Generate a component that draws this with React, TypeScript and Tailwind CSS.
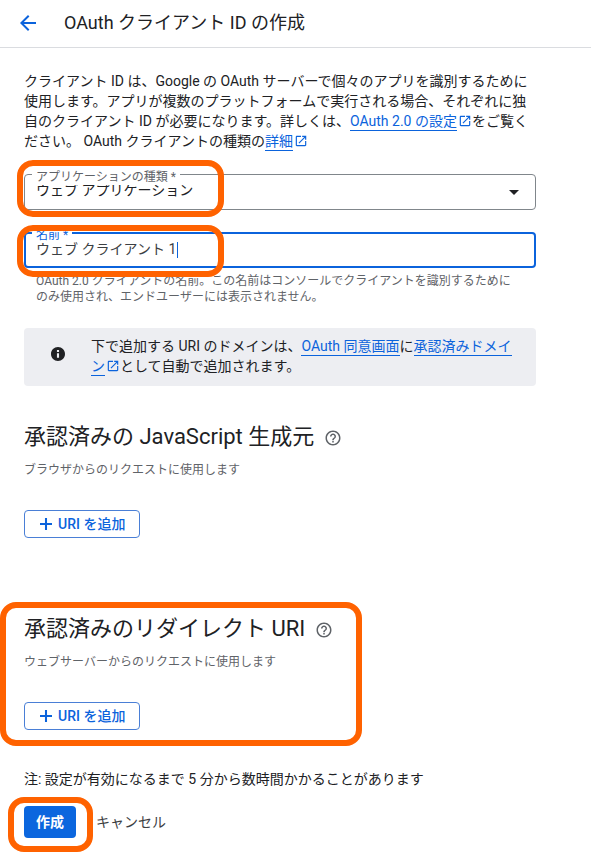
import { useState, type ReactNode } from "react"

const FONT_BODY = "font-[Roboto,'Noto_Sans_CJK_JP',sans-serif]"

const ICONS = {
    back: "M20 11H7.83l5.59-5.59L12 4l-8 8 8 8 1.41-1.41L7.83 13H20v-2z",
    open: "M19 19H5V5h7V3H5c-1.11 0-2 .9-2 2v14c0 1.1.89 2 2 2h14c1.1 0 2-.9 2-2v-7h-2v7zM14 3v2h3.59l-9.83 9.83 1.41 1.41L19 6.41V10h2V3h-7z",
    drop: "M7 10l5 5 5-5z",
    info: "M12 2C6.48 2 2 6.48 2 12s4.48 10 10 10 10-4.48 10-10S17.52 2 12 2zm1.5 15.5h-3v-6.5h3v6.5zm0-8.5h-3V6.2h3V9z",
    help: "M11 18h2v-2h-2v2zm1-16C6.48 2 2 6.48 2 12s4.48 10 10 10 10-4.48 10-10S17.52 2 12 2zm0 18c-4.41 0-8-3.59-8-8s3.59-8 8-8 8 3.59 8 8-3.59 8-8 8zm0-14c-2.21 0-4 1.79-4 4h2c0-1.1.9-2 2-2s2 .9 2 2c0 2-3 1.75-3 5h2c0-2.25 3-2.5 3-5 0-2.21-1.79-4-4-4z",
    plus: "M19 13.2h-5.8v5.8h-2.4v-5.8H5v-2.4h5.8V5h2.4v5.8H19v2.4z",
}

function Icon({ name, className, viewBox = "0 0 24 24" }: { name: keyof typeof ICONS, className: string, viewBox?: string }) {
    return (
        <svg viewBox={viewBox} fill="currentColor" className={className} aria-hidden>
            <path d={ICONS[name]} />
        </svg>
    )
}

function TextLink({ children, external = false }: { children: ReactNode, external?: boolean }) {
    return (
        <>
            <a href="#" className="border-b border-[#0b63dc] pb-px text-[#0b63dc]">{children}</a>
            {external && <Icon name="open" className="ml-px inline size-3.5 align-[-2px] text-[#0b63dc]" />}
        </>
    )
}

// orange marker drawn over the form
function Marker({ className }: { className: string }) {
    return <span className={"pointer-events-none absolute z-20 border-6 border-[#ff6200] " + className} aria-hidden />
}

function UriSection({ title, description }: { title: string, description: string }) {
    return (
        <>
            <div className="flex items-center gap-2.5">
                <h2 className="text-[22px] leading-7 text-[#202124]">{title}</h2>
                <button type="button" aria-label="ヘルプ" className="mt-0.5 text-[#5f6368]">
                    <Icon name="help" className="size-[18px]" />
                </button>
            </div>
            <p className="mt-[11px] text-xs leading-4 text-[#5f6368]">{description}</p>
            <button
                type="button"
                className="mt-8 flex h-7 items-center gap-1.5 rounded-sm border border-[#4a7fd6] pr-3.5 pl-[15px]
                            text-sm font-medium text-[#0b63dc]"
            >
                <Icon name="plus" viewBox="5 5 14 14" className="size-3" />
                URI を追加
            </button>
        </>
    )
}

export default function App() {
    const [kind, setKind] = useState("web")
    const [name, setName] = useState("ウェブ クライアント 1")

    return (
        <div lang="ja" className={"min-h-screen overflow-x-hidden bg-white text-[#202124] " + FONT_BODY}>
            <header className="flex h-12 items-center gap-6 border-b border-[#dadce0] px-4 pb-0.5">
                <a href="#" aria-label="戻る" className="text-[#0b63dc]">
                    <Icon name="back" className="size-6" />
                </a>
                <h1 className="text-lg leading-6">OAuth クライアント ID の作成</h1>
            </header>

            <form className="max-w-[560px] px-6 pt-[23px]" onSubmit={(e) => e.preventDefault()}>
                <p className="text-sm leading-5">
                    クライアント ID は、Google の OAuth サーバーで個々のアプリを識別するために使用します。アプリが複数のプラットフォームで実行される場合、それぞれに独自のクライアント ID が必要になります。詳しくは、
                    <TextLink external>OAuth 2.0 の設定</TextLink>
                    をご覧ください。 OAuth クライアントの種類の
                    <TextLink external>詳細</TextLink>
                </p>

                <div className="relative mt-[23px]">
                    <label htmlFor="kind" className="absolute -top-[5px] left-2 bg-white px-1 text-xs leading-4 text-[#5f6368]">
                        アプリケーションの種類 *
                    </label>
                    <select
                        id="kind"
                        value={kind}
                        onChange={(e) => setKind(e.target.value)}
                        className="block h-9 w-full appearance-none rounded-sm border border-[#80868b] bg-white px-[11px] pb-1 text-sm"
                    >
                        <option value="web">ウェブ アプリケーション</option>
                    </select>
                    <Icon name="drop" className="pointer-events-none absolute top-1.5 right-2.5 size-6" />
                    <Marker className="-top-3.5 -left-[7px] h-[57px] w-[207px] rounded-2xl" />
                </div>

                <div className="relative mt-[22px]">
                    <label htmlFor="name" className="absolute -top-[5px] left-2 bg-white px-1 text-xs leading-4 text-[#0b63dc]">
                        名前 *
                    </label>
                    <input
                        id="name"
                        value={name}
                        onChange={(e) => setName(e.target.value)}
                        className="block h-9 w-full rounded-sm border-2 border-[#0b63dc] px-2.5 pb-1 text-sm text-[#3c4043] outline-none"
                    />
                    <span className="absolute top-2.5 left-[153px] h-4 w-px bg-[#0b63dc]" aria-hidden />
                    <Marker className="-top-[7px] -left-[7px] h-[52px] w-[207px] rounded-2xl" />
                </div>
                <p className="mt-[5px] pr-6 pl-3 text-xs leading-4 text-[#5f6368]">
                    OAuth 2.0 クライアントの名前。この名前はコンソールでクライアントを識別するためにのみ使用され、エンドユーザーには表示されません。
                </p>

                <div className="mt-[23px] flex gap-[26px] rounded-sm bg-[#edeef2] pt-2 pr-5 pb-2.5 pl-[27px]">
                    <Icon name="info" viewBox="2 2 20 20" className="mt-[11px] size-3.5 shrink-0" />
                    <p className="text-sm leading-5">
                        下で追加する URI のドメインは、
                        <TextLink>OAuth 同意画面</TextLink>
                        に
                        <TextLink external>承認済みドメイン</TextLink>
                        として自動で追加されます。
                    </p>
                </div>

                <section className="mt-[37px]">
                    <UriSection title="承認済みの JavaScript 生成元" description="ブラウザからのリクエストに使用します" />
                </section>

                <section className="relative mt-[77px]">
                    <UriSection title="承認済みのリダイレクト URI" description="ウェブサーバーからのリクエストに使用します" />
                    <Marker className="-top-[13px] -left-6 h-36 w-[362px] rounded-2xl" />
                </section>

                <p className="mt-[39px] text-sm leading-5">注: 設定が有効になるまで 5 分から数時間かかることがあります</p>

                <div className="flex items-center gap-5 pt-[17px] pb-3.5">
                    <div className="relative">
                        <button type="submit" className="block h-8 rounded-sm bg-[#0b66de] px-3 text-sm font-bold text-white">作成</button>
                        <Marker className="-top-[9px] -left-4 h-[55px] w-[85px] rounded-2xl" />
                    </div>
                    <button type="button" className="text-sm text-[#3c4043]">キャンセル</button>
                </div>
            </form>
        </div>
    )
}
